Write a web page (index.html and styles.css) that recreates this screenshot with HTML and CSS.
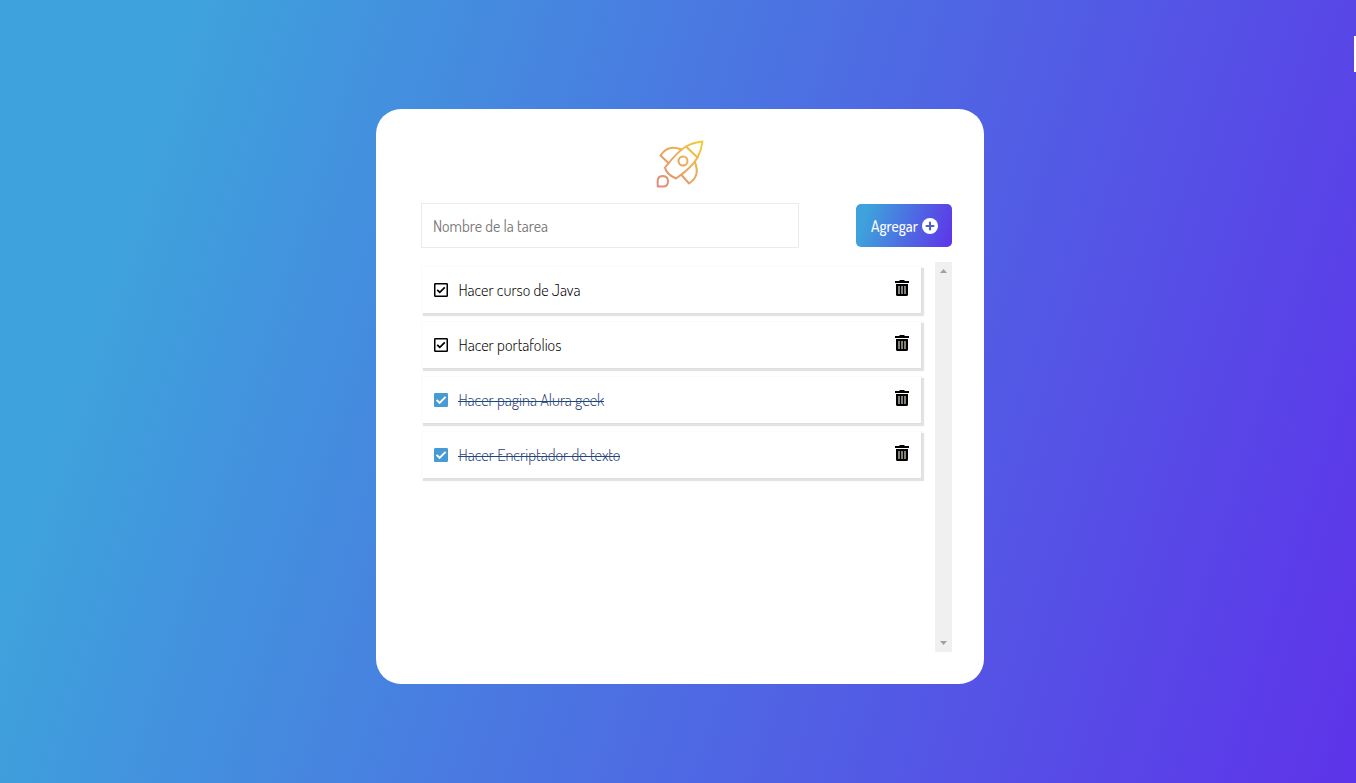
FILE: index.html
```html
<!DOCTYPE html>
<html lang="es">
<head>
<meta charset="utf-8">
<title>Lista de tareas</title>
<link rel="stylesheet" href="styles.css">
</head>
<body>
<svg class="defs" aria-hidden="true">
  <symbol id="trash" viewBox="0 0 14 16"><path d="M4.500 0h5v1H14v2H0V1h4.500zM1 4h12v10.500q0 1.500-1.500 1.500h-9Q1 16 1 14.500z"/><path class="slats" d="M4 6v8M7 6v8M10 6v8"/></symbol>
  <symbol id="open-check" viewBox="0 0 14 14"><rect x=".75" y=".75" width="12.500" height="12.500" rx=".6" fill="none" stroke="currentColor" stroke-width="1.500"/><path d="M3.200 6.800l2.600 2.600 5-5" fill="none" stroke="currentColor" stroke-width="1.700"/></symbol>
  <symbol id="full-check" viewBox="0 0 14 14"><rect width="14" height="14" rx="1.200" fill="currentColor"/><path d="M2.600 6.900l3 3 6-6" fill="none" stroke="#fff" stroke-width="2"/></symbol>
</svg>
<main class="card">
  <svg class="rocket" viewBox="0 0 50 50">
    <defs><linearGradient id="flame" gradientUnits="userSpaceOnUse" x1="2" y1="48" x2="48" y2="2"><stop offset="0" stop-color="#dc8c7c"/><stop offset=".5" stop-color="#eba45c"/><stop offset="1" stop-color="#f1cf35"/></linearGradient></defs>
    <g fill="none" stroke="url(#flame)" stroke-width="2" stroke-linejoin="round" stroke-linecap="round">
      <path d="M47.500 2.500Q38 3.500 31 7.500Q23 12 10 28.500Q11 35 21 39.500Q37 28.500 42.500 18.500Q46.500 11 47.500 2.500z"/>
      <path d="M31 7.500L42.500 18.500M26.500 10.500Q13 5 5.500 16.500L13.500 24M40 23.500Q45.500 37 34 44.500L27 36.500"/>
      <circle cx="28" cy="22" r="4.500"/>
      <path d="M2.700 47.500v-6q.3-4.500 5.300-4.500 5 .4 5 5.200 0 5.300-5 5.300z"/>
    </g>
  </svg>
  <form class="entry">
    <div class="field"><svg class="label"><text x="0" y="17" textLength="115" lengthAdjust="spacingAndGlyphs">Nombre de la tarea</text></svg></div>
    <button class="add" type="button"><svg class="add-label"><text x="0" y="18" textLength="47" lengthAdjust="spacingAndGlyphs">Agregar</text></svg><svg class="plus" viewBox="0 0 16 16"><circle cx="8" cy="8" r="8" fill="#fff"/><path d="M8 3.700v8.600M3.700 8h8.600" stroke="#5061c3" stroke-width="2.100"/></svg></button>
  </form>
  <div class="scroll">
    <ul class="tasks">
      <li class="task"><svg class="check"><use href="#open-check"/></svg><svg class="label"><text x=".4" y="17" textLength="122" lengthAdjust="spacingAndGlyphs">Hacer curso de Java</text></svg><svg class="trash"><use href="#trash"/></svg></li>
      <li class="task"><svg class="check"><use href="#open-check"/></svg><svg class="label"><text x=".4" y="17" textLength="103" lengthAdjust="spacingAndGlyphs">Hacer portafolios</text></svg><svg class="trash"><use href="#trash"/></svg></li>
      <li class="task done"><svg class="check"><use href="#full-check"/></svg><svg class="label"><text x=".4" y="17" textLength="146" lengthAdjust="spacingAndGlyphs">Hacer pagina Alura geek</text><path d="M0 12.500h146"/></svg><svg class="trash"><use href="#trash"/></svg></li>
      <li class="task done"><svg class="check"><use href="#full-check"/></svg><svg class="label"><text x=".4" y="17" textLength="162" lengthAdjust="spacingAndGlyphs">Hacer Encriptador de texto</text><path d="M0 12.500h162"/></svg><svg class="trash"><use href="#trash"/></svg></li>
    </ul>
    <div class="bar"><svg viewBox="0 0 7 4"><path d="M0 4L3.500 0 7 4z"/></svg><svg viewBox="0 0 7 4"><path d="M0 0h7L3.500 4z"/></svg></div>
  </div>
</main>
<i class="edge"></i>
</body>
</html>
```
FILE: styles.css
```css
* { box-sizing: border-box; }
body {
  margin: 0;
  height: 783px;
  padding: 109px 0 0 376px;
  overflow: hidden;
  font-family: Dosis, Roboto, sans-serif;
  font-size: 16px;
  background: linear-gradient(107.56deg, #3ea2dc 12%, #5f2eea 104%);
}
.defs { position: absolute; width: 0; height: 0; }
.card {
  width: 608px;
  height: 575px;
  padding: 30px 32px 0 45px;
  border-radius: 25px;
  background: #fff;
}
.rocket { display: block; width: 50px; height: 50px; margin: 0 0 14px 234px; }
.entry { display: flex; justify-content: space-between; align-items: center; height: 45px; margin: 0 0 14px; }
.field { width: 378px; height: 45px; padding: 11px; border: 1px solid #ebebeb; }
.label { display: block; width: 200px; height: 23px; font-weight: 300; fill: #000; }
.field .label { fill: #777; font-weight: 400; }
.add {
  display: flex;
  align-items: center;
  gap: 4px;
  width: 96px;
  height: 43px;
  padding: 0 14px 0 15px;
  border: 0;
  border-radius: 5px;
  font: 500 16px Dosis, Roboto, sans-serif;
  background: linear-gradient(107.56deg, #3ea2dc 12%, #5f2eea 104%);
}
.add-label { width: 47px; height: 23px; fill: #fff; overflow: visible; }
.plus { flex: none; width: 16px; height: 16px; }
.scroll { display: flex; justify-content: space-between; height: 390px; }
.tasks { width: 501px; margin: 0; padding: 5px 0 0 1px; list-style: none; }
.task {
  display: flex;
  align-items: center;
  width: 499px;
  height: 46px;
  margin-bottom: 9px;
  padding: 0 12px;
  background: #fff;
  box-shadow: 0 0 1px 1px rgba(0, 0, 0, .02), 2px 2px 1px 1px rgba(0, 0, 0, .11);
}
.check { width: 14px; height: 14px; margin-right: 10px; color: #000; }
.task .label { margin-top: 1px; }
.trash { width: 14px; height: 16px; margin: 0 0 4px auto; }
.slats { fill: none; stroke: #c9c4b4; stroke-width: 1.3; }
.done .check { color: #479bd5; }
.done .label { fill: #2c4276; }
.label path { stroke: #1d477d; stroke-width: 1; }
.bar {
  display: flex;
  flex-direction: column;
  align-items: center;
  justify-content: space-between;
  width: 17px;
  padding: 7px 0;
  background: #f0f0f0;
}
.bar svg { width: 7px; height: 4px; fill: #a0a0a0; }
.edge { position: absolute; top: 36px; right: 0; width: 2px; height: 36px; background: #fff; }
```
